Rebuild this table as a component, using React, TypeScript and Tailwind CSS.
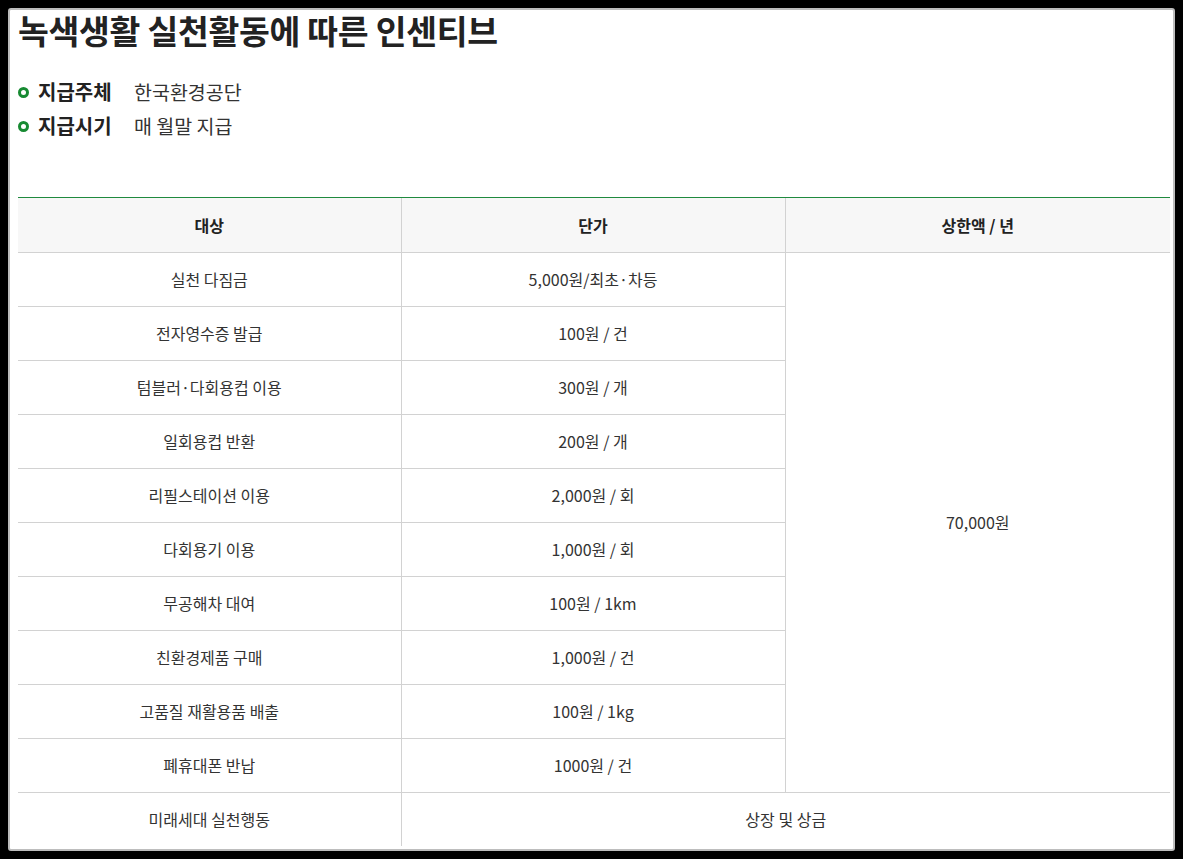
import React from "react";

const rows: [string, string][] = [
  ["실천 다짐금", "5,000원/최초·차등"],
  ["전자영수증 발급", "100원 / 건"],
  ["텀블러·다회용컵 이용", "300원 / 개"],
  ["일회용컵 반환", "200원 / 개"],
  ["리필스테이션 이용", "2,000원 / 회"],
  ["다회용기 이용", "1,000원 / 회"],
  ["무공해차 대여", "100원 / 1km"],
  ["친환경제품 구매", "1,000원 / 건"],
  ["고품질 재활용품 배출", "100원 / 1kg"],
  ["폐휴대폰 반납", "1000원 / 건"],
];

const App: React.FC = () => {
  return (
    <div
      className="w-[1183px] h-[859px] bg-black p-[8px]"
      style={{ fontFamily: '"Noto Sans CJK KR", "Noto Sans", sans-serif' }}
    >
      <div className="h-full bg-white border-2 border-[#bdbdbd] rounded-[3px] pl-[8px] pr-[3px]">
        <h1 className="text-[33.5px] font-bold text-[#222] leading-[40px] tracking-[-0.3px]">
          녹색생활 실천활동에 따른 인센티브
        </h1>

        <ul className="mt-[28px] space-y-[6px]">
          {[
            ["지급주체", "한국환경공단"],
            ["지급시기", "매 월말 지급"],
          ].map(([label, value]) => (
            <li key={label} className="flex items-center h-[28px]">
              <span className="w-[11px] h-[11px] rounded-full border-[3px] border-[#178a32] mr-[9px]" />
              <span className="text-[20px] font-bold text-[#222] w-[96px]">{label}</span>
              <span className="text-[19.5px] text-[#333]">{value}</span>
            </li>
          ))}
        </ul>

        {/* 인센티브 표 */}
        <div className="mt-[57px] h-px bg-[#1f8a3e]" />
        <table className="w-full table-fixed border-collapse text-[16px] text-[#333]">
          <colgroup>
            <col className="w-[383px]" />
            <col className="w-[384px]" />
            <col />
          </colgroup>
          <thead>
            <tr className="h-[54px] bg-[#f7f7f7]">
              <th className="font-bold text-[#222] border-b border-[#d2d2d2]">대상</th>
              <th className="font-bold text-[#222] border-b border-l border-[#d2d2d2]">단가</th>
              <th className="font-bold text-[#222] border-b border-l border-[#d2d2d2]">상한액 / 년</th>
            </tr>
          </thead>
          <tbody>
            {rows.map(([target, price], idx) => (
              <tr key={target} className="h-[54px] border-b border-[#d2d2d2]">
                <td className="text-center">{target}</td>
                <td className="text-center border-l border-[#d2d2d2]">{price}</td>
                {idx === 0 && (
                  <td rowSpan={rows.length} className="text-center border-l border-[#d2d2d2]">
                    70,000원
                  </td>
                )}
              </tr>
            ))}
            <tr className="h-[54px]">
              <td className="text-center">미래세대 실천행동</td>
              <td colSpan={2} className="text-center border-l border-[#d2d2d2]">
                상장 및 상금
              </td>
            </tr>
          </tbody>
        </table>
      </div>
    </div>
  );
};

export default App;
